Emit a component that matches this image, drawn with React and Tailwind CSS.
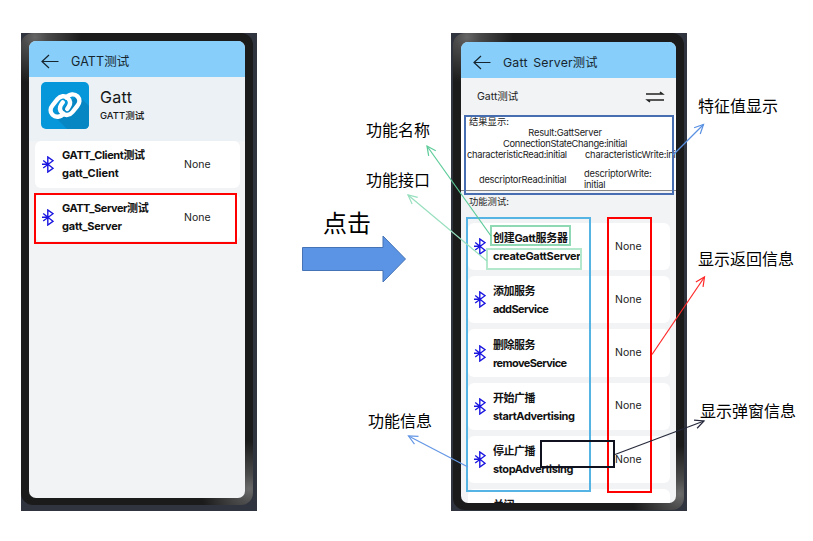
import React from "react";

const SANS = "font-['Inter','Noto_Sans_CJK_SC',sans-serif]";

function BackArrow() {
  return (
    <svg className="block h-[16px] w-[18px] shrink-0" viewBox="0 0 18 16" fill="none" stroke="#16252e" strokeWidth="1.2">
      <path d="M17.5 7.500H1M8 1L1 7.500l7 6.500" />
    </svg>
  );
}

function Bluetooth() {
  return (
    <svg className="block h-[17px] w-[12px] shrink-0" viewBox="0 0 12 17" fill="none" stroke="#1a16e0" strokeWidth="1.4">
      <path d="M1.200 4.500L11 12.300 5.800 16V1L11 4.700 1.200 12M0 8.300h6" />
    </svg>
  );
}

function LinkLogo() {
  return (
    <svg className="block h-[47px] w-[48px] shrink-0" viewBox="0 0 48 47">
      <rect width="48" height="47" rx="5" fill="#0697da" />
      <path d="M13 34L26 47h17q5 0 5-5V24L37 13z" fill="#0786c4" />
      <g fill="none" stroke="#fff" strokeWidth="4.400" strokeLinecap="round" strokeLinejoin="round">
        <path d="M22.500 31.500c-2.800 4-8 4.300-11 1.300-2.800-2.900-2.300-6.600.2-9.600l4.800-6c2.700-3.400 7.300-4 10.300-1.200 2.700 2.600 2.900 5.800.9 8.800l-1.500 2.200" />
        <path d="M25.500 15.700c2.800-4 8-4.300 11-1.300 2.800 2.900 2.300 6.600-.2 9.600l-4.800 6c-2.700 3.400-7.300 4-10.300 1.200-2.700-2.600-2.900-5.800-.9-8.800l1.500-2.200" />
      </g>
    </svg>
  );
}

function Row({ title, name, side, nameTracking, titleTracking }) {
  const left = side === "left";
  return (
    <div className={`flex h-[47.300px] shrink-0 items-center rounded-[6px] bg-white ${left ? "w-[205px] pl-[7px]" : "w-[202px] pl-[6px]"}`}>
      <Bluetooth />
      <div className={`flex shrink-0 flex-col text-[11px] leading-[18px] font-bold whitespace-nowrap text-[#111] ${left ? "w-[130px] pb-[1px] pl-[8px]" : "w-[129px] pt-[1px] pl-[7px]"}`}>
        <span className={titleTracking}>{title}</span>
        <span className={nameTracking}>{name}</span>
      </div>
      <span className="text-[10.500px] text-[#222]">None</span>
    </div>
  );
}

const BEZEL =
  "bg-[radial-gradient(circle_at_14px_4px,#666_0,#4a4a4a_12px,transparent_46px),radial-gradient(circle_at_calc(100%-4px)_calc(100%-16px),#6b6b6b_0,#4c4c4c_14px,transparent_48px)] bg-[#1b1b1b]";

function LeftPhone() {
  return (
    <div className="h-[478px] w-[236px] bg-[#30343f]">
      <div className={`h-[472px] w-[232px] rounded-[12px] pt-[8px] pl-[8px] ${BEZEL}`}>
        <div className="flex h-[457px] w-[216px] flex-col overflow-hidden rounded-[7px] bg-[#f1f3f5]">
          <div className="flex h-[36px] shrink-0 items-center bg-[#87cefa] pt-[5px] pl-[12px]">
            <BackArrow />
            <span className="pt-[1px] pl-[12px] text-[12.500px] tracking-[0.100px] text-[#16252e]">GATT测试</span>
          </div>
          <div className="flex h-[64px] shrink-0 bg-[#ebf1f5] pt-[5px] pl-[12px]">
            <LinkLogo />
            <div className="flex flex-col pl-[11px] text-[#161616]">
              <span className="pt-[3px] text-[16px] leading-[24px] tracking-[0.300px]">Gatt</span>
              <span className="text-[9.500px] leading-[14px] font-medium">GATT测试</span>
            </div>
          </div>
          <div className="flex flex-col gap-[5.700px] pl-[6px]">
            <Row side="left" title="GATT_Client测试" name="gatt_Client" titleTracking="tracking-[-0.370px]" nameTracking="tracking-[-0.050px]" />
            <Row side="left" title="GATT_Server测试" name="gatt_Server" titleTracking="tracking-[-0.470px]" nameTracking="tracking-[-0.200px]" />
          </div>
        </div>
      </div>
    </div>
  );
}

function RightPhone() {
  return (
    <div className="h-[478px] w-[236px] bg-[#30343f] pl-[2px]">
      <div className={`h-[477px] w-[231px] rounded-[12px] pt-[9px] pl-[8px] ${BEZEL}`}>
        <div className="flex h-[461px] w-[215px] flex-col overflow-hidden rounded-[7px] bg-[#f1f3f5]">
          <div className="flex h-[36px] shrink-0 items-center bg-[#87cefa] pt-[5px] pl-[12px]">
            <BackArrow />
            <span className="pt-[1px] pl-[12px] text-[12.300px] tracking-[0.200px] whitespace-nowrap text-[#16252e] [word-spacing:2px]">Gatt Server测试</span>
          </div>
          <div className="flex h-[37px] shrink-0 items-center justify-between pr-[11px] pl-[16px]">
            <span className="text-[10.500px] text-[#222]">Gatt测试</span>
            <svg className="h-[12px] w-[20px]" viewBox="0 0 20 12" fill="none" stroke="#222" strokeWidth="1.600">
              <path d="M1 3h16.500L15 1M19 9H2.500L5 11" />
            </svg>
          </div>
          <div className="flex h-[76px] shrink-0 flex-col border-b border-[#888] bg-white text-[9.300px] leading-[11px] whitespace-nowrap text-[#222]">
            <span className="pt-[1px] pl-[8px]">结果显示:</span>
            <span className="pr-[7px] text-center tracking-[-0.200px]">Result:GattServer</span>
            <span className="pr-[7px] text-center tracking-[-0.300px]">ConnectionStateChange:initial</span>
            <div className="flex">
              <span className="w-[119px] shrink-0 pl-[6px] tracking-[-0.300px]">characteristicRead:initial</span>
              <span className="pl-[5px] tracking-[-0.200px]">characteristicWrite:initial</span>
            </div>
            <div className="flex items-center pt-[9px]">
              <span className="w-[123px] shrink-0 pl-[18px] tracking-[-0.250px]">descriptorRead:initial</span>
              <div className="flex flex-col leading-[10.500px] tracking-[-0.200px]">
                <span>descriptorWrite:</span>
                <span>initial</span>
              </div>
            </div>
          </div>
          <span className="h-[32px] shrink-0 pt-[3px] pl-[8px] text-[9.300px] leading-[15px] text-[#222]">功能测试:</span>
          <div className="flex flex-col gap-[5.900px] pl-[7px]">
            <Row side="right" title="创建Gatt服务器" name="createGattServer" titleTracking="tracking-[-0.300px]" nameTracking="tracking-[-0.300px]" />
            <Row side="right" title="添加服务" name="addService" titleTracking="tracking-[-0.500px]" nameTracking="tracking-[-0.600px]" />
            <Row side="right" title="删除服务" name="removeService" titleTracking="tracking-[-0.500px]" nameTracking="tracking-[-0.600px]" />
            <Row side="right" title="开始广播" name="startAdvertising" titleTracking="tracking-[-0.500px]" nameTracking="tracking-[-0.400px]" />
            <Row side="right" title="停止广播" name="stopAdvertising" titleTracking="tracking-[-0.500px]" nameTracking="tracking-[-0.400px]" />
            <Row side="right" title="关闭" name="" titleTracking="tracking-[-0.500px]" nameTracking="h-[17px]" />
          </div>
        </div>
      </div>
    </div>
  );
}

function Callout({ from, to, color, width = 1.2 }) {
  const angle = Math.atan2(to[1] - from[1], to[0] - from[0]);
  const arm = (turn) => `${to[0] - 10 * Math.cos(angle + turn)},${to[1] - 10 * Math.sin(angle + turn)}`;
  return (
    <g fill="none" stroke={color} strokeWidth={width}>
      <path d={`M${from}L${to}`} />
      <path d={`M${arm(0.45)}L${to}L${arm(-0.45)}`} />
    </g>
  );
}

function Annotations() {
  return (
    <svg className="absolute top-0 left-0 h-[541px] w-[813px]" viewBox="0 0 813 541" fill="none">
      <path d="M302.500 247.500h80.500v-11.500l22.500 23-22.500 23v-11.500h-80.500z" fill="#5b94e5" stroke="#4673b5" />
      <rect x="35" y="194" width="201" height="49" stroke="#f00" strokeWidth="2" />
      <rect x="465" y="116" width="208" height="78" stroke="#466eb0" strokeWidth="2" />
      <rect x="467" y="218" width="123" height="273" stroke="#55b4e4" strokeWidth="2" />
      <rect x="608" y="218" width="43" height="274" stroke="#f00" strokeWidth="2" />
      <rect x="491" y="226" width="79" height="19" stroke="#8fdab5" strokeWidth="2" />
      <rect x="487" y="249" width="94" height="20" stroke="#b3e8cd" strokeWidth="2" />
      <rect x="541" y="441" width="73" height="26" stroke="#10131f" strokeWidth="2" />
      <Callout from={[491, 236]} to={[427, 146]} color="#5bcb98" />
      <Callout from={[487, 261]} to={[408, 195]} color="#97dfbe" />
      <Callout from={[673, 155]} to={[703.5, 124.5]} color="#5a91e2" />
      <Callout from={[652, 354.5]} to={[704.5, 277]} color="#ff2828" />
      <Callout from={[615, 454.5]} to={[704, 421]} color="#25283a" />
      <Callout from={[468, 467]} to={[408.5, 436]} color="#6497e5" />
    </svg>
  );
}

function Label({ place, children }) {
  return <span className={`absolute font-['Noto_Sans_CJK_SC',sans-serif] whitespace-nowrap text-black ${place}`}>{children}</span>;
}

export default function App() {
  return (
    <div className={`relative h-[541px] w-[813px] overflow-hidden bg-white ${SANS}`}>
      <div className="flex gap-[194px] pt-[33px] pl-[21px]">
        <LeftPhone />
        <RightPhone />
      </div>
      <Annotations />
      <Label place="left-[366px] top-[117px] text-[16px] leading-[24px]">功能名称</Label>
      <Label place="left-[366px] top-[167px] text-[16px] leading-[24px]">功能接口</Label>
      <Label place="left-[323px] top-[204px] text-[24px] leading-[36px]">点击</Label>
      <Label place="left-[368px] top-[408px] text-[16px] leading-[24px]">功能信息</Label>
      <Label place="left-[698px] top-[93px] text-[16px] leading-[24px]">特征值显示</Label>
      <Label place="left-[698px] top-[246px] text-[16px] leading-[24px]">显示返回信息</Label>
      <Label place="left-[700px] top-[398px] text-[16px] leading-[24px]">显示弹窗信息</Label>
    </div>
  );
}
